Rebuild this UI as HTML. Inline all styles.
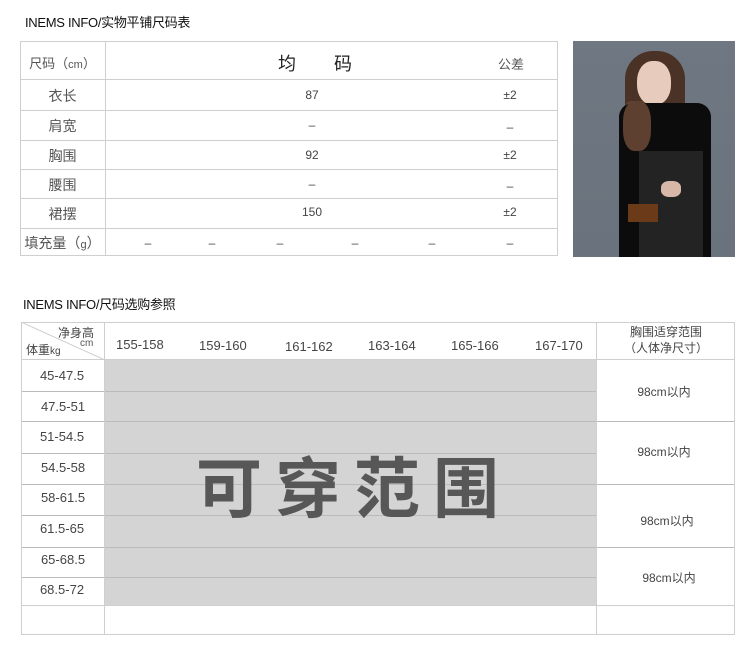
<!DOCTYPE html>
<html><head><meta charset="utf-8"><style>
*{margin:0;padding:0;box-sizing:border-box}
body{width:750px;height:648px;background:#fff;position:relative;overflow:hidden;font-family:"Liberation Sans","Noto Sans CJK SC",sans-serif;color:#333}
.a{position:absolute;white-space:nowrap}
.h{position:absolute;height:1px;background:#cfcfcf}
.v{position:absolute;width:1px;background:#cfcfcf}
.t{font-size:13px;color:#111;letter-spacing:-0.3px}
.c{position:absolute;text-align:center;font-size:12px;color:#444}
.s{font-size:13px;color:#444}
</style></head><body>
<div class="a t" style="left:25px;top:12px">INEMS INFO/实物平铺尺码表</div>

<div class="h" style="left:20px;width:538px;top:41px"></div>
<div class="h" style="left:20px;width:538px;top:79px"></div>
<div class="h" style="left:20px;width:538px;top:110px"></div>
<div class="h" style="left:20px;width:538px;top:140px"></div>
<div class="h" style="left:20px;width:538px;top:169px"></div>
<div class="h" style="left:20px;width:538px;top:198px"></div>
<div class="h" style="left:20px;width:538px;top:228px"></div>
<div class="h" style="left:20px;width:538px;top:255px"></div>
<div class="v" style="left:20px;top:41px;height:215px"></div>
<div class="v" style="left:105px;top:41px;height:215px"></div>
<div class="v" style="left:557px;top:41px;height:215px"></div>

<div class="c" style="left:20px;width:85px;top:53px;font-size:13px;color:#555">尺码（<span style="font-size:11px">cm</span>）</div>
<div class="c" style="left:272px;width:30px;top:50px;font-size:18px;color:#222">均</div>
<div class="c" style="left:328px;width:30px;top:50px;font-size:18px;color:#222">码</div>
<div class="c" style="left:491px;width:40px;top:54px;font-size:13px;color:#555">公差</div>

<div class="c" style="left:20px;width:85px;top:86px;font-size:14px;color:#555">衣长</div>
<div class="c" style="left:20px;width:85px;top:116px;font-size:14px;color:#555">肩宽</div>
<div class="c" style="left:20px;width:85px;top:146px;font-size:14px;color:#555">胸围</div>
<div class="c" style="left:20px;width:85px;top:175px;font-size:14px;color:#555">腰围</div>
<div class="c" style="left:20px;width:85px;top:204px;font-size:14px;color:#555">裙摆</div>
<div class="c" style="left:20px;width:85px;top:233px;font-size:14px;color:#555">填充量（<span style="font-size:11px">g</span>）</div>

<div class="c" style="left:292px;width:40px;top:88px;font-size:12px">87</div>
<div class="c" style="left:292px;width:40px;top:118px">–</div>
<div class="c" style="left:292px;width:40px;top:148px;font-size:12px">92</div>
<div class="c" style="left:292px;width:40px;top:177px">–</div>
<div class="c" style="left:292px;width:40px;top:205px;font-size:12px">150</div>
<div class="c" style="left:490px;width:40px;top:88px;font-size:12px">±2</div>
<div class="c" style="left:490px;width:40px;top:120px">–</div>
<div class="c" style="left:490px;width:40px;top:148px;font-size:12px">±2</div>
<div class="c" style="left:490px;width:40px;top:179px">–</div>
<div class="c" style="left:490px;width:40px;top:205px;font-size:12px">±2</div>
<div class="c" style="left:138px;width:20px;top:236px">–</div>
<div class="c" style="left:202px;width:20px;top:236px">–</div>
<div class="c" style="left:270px;width:20px;top:236px">–</div>
<div class="c" style="left:345px;width:20px;top:236px">–</div>
<div class="c" style="left:422px;width:20px;top:236px">–</div>
<div class="c" style="left:500px;width:20px;top:236px">–</div>

<div class="a" style="left:573px;top:41px;width:162px;height:216px;background:linear-gradient(#6f7782,#6a727d);overflow:hidden">
 <div class="a" style="left:52px;top:10px;width:60px;height:110px;border-radius:28px 28px 10px 10px;background:#4a3226"></div>
 <div class="a" style="left:46px;top:60px;width:34px;height:60px;border-radius:40%;background:#6b4a33"></div>
 <div class="a" style="left:64px;top:20px;width:34px;height:44px;border-radius:45%;background:#e7cbbd"></div>
 <div class="a" style="left:46px;top:62px;width:92px;height:160px;border-radius:14px 14px 0 0;background:#0c0c0c"></div>
 <div class="a" style="left:50px;top:60px;width:28px;height:50px;border-radius:40%;background:#5d4030"></div>
 <div class="a" style="left:66px;top:110px;width:64px;height:110px;background:#232323"></div>
 <div class="a" style="left:55px;top:163px;width:30px;height:18px;background:#6b3a18"></div>
 <div class="a" style="left:88px;top:140px;width:20px;height:16px;border-radius:40%;background:#d9b7a8"></div>
</div>

<div class="a t" style="left:23px;top:294px">INEMS INFO/尺码选购参照</div>

<div class="a" style="left:104px;top:359px;width:492px;height:246px;background:#d4d4d4"></div>
<div class="h" style="left:21px;width:714px;top:322px"></div>
<div class="h" style="left:21px;width:714px;top:359px"></div>
<div class="h" style="left:21px;width:576px;top:391px;background:#bbb"></div>
<div class="h" style="left:21px;width:714px;top:421px;background:#bbb"></div>
<div class="h" style="left:21px;width:576px;top:453px;background:#bbb"></div>
<div class="h" style="left:21px;width:714px;top:484px;background:#bbb"></div>
<div class="h" style="left:21px;width:576px;top:515px;background:#bbb"></div>
<div class="h" style="left:21px;width:714px;top:547px;background:#bbb"></div>
<div class="h" style="left:21px;width:576px;top:577px;background:#bbb"></div>
<div class="h" style="left:21px;width:714px;top:605px"></div>
<div class="h" style="left:21px;width:714px;top:634px"></div>
<div class="v" style="left:21px;top:322px;height:313px"></div>
<div class="v" style="left:104px;top:322px;height:313px"></div>
<div class="v" style="left:596px;top:322px;height:313px"></div>
<div class="v" style="left:734px;top:322px;height:313px"></div>
<svg class="a" style="left:21px;top:322px" width="84" height="38"><line x1="0" y1="0" x2="84" y2="38" stroke="#ccc"/></svg>
<div class="a" style="left:58px;top:324px;font-size:12px;color:#444">净身高</div>
<div class="a" style="left:80px;top:338px;font-size:10px;color:#555">cm</div>
<div class="a" style="left:26px;top:341px;font-size:12px;color:#444">体重<span style="font-size:10px">kg</span></div>

<div class="a s" style="left:116px;top:337px">155-158</div>
<div class="a s" style="left:199px;top:338px">159-160</div>
<div class="a s" style="left:285px;top:339px">161-162</div>
<div class="a s" style="left:368px;top:338px">163-164</div>
<div class="a s" style="left:451px;top:338px">165-166</div>
<div class="a s" style="left:535px;top:338px">167-170</div>
<div class="c" style="left:597px;width:138px;top:324px;font-size:12px;line-height:16px">胸围适穿范围<br>（人体净尺寸）</div>

<div class="c s" style="left:21px;width:82px;top:368px">45-47.5</div>
<div class="c s" style="left:21px;width:84px;top:399px">47.5-51</div>
<div class="c s" style="left:21px;width:82px;top:429px">51-54.5</div>
<div class="c s" style="left:21px;width:84px;top:460px">54.5-58</div>
<div class="c s" style="left:21px;width:84px;top:490px">58-61.5</div>
<div class="c s" style="left:21px;width:82px;top:521px">61.5-65</div>
<div class="c s" style="left:21px;width:84px;top:552px">65-68.5</div>
<div class="c s" style="left:21px;width:82px;top:582px">68.5-72</div>

<div class="c" style="left:597px;width:134px;top:383px">98cm以内</div>
<div class="c" style="left:597px;width:134px;top:443px">98cm以内</div>
<div class="c" style="left:600px;width:134px;top:512px">98cm以内</div>
<div class="c" style="left:602px;width:134px;top:569px">98cm以内</div>

<div class="a" style="left:196px;top:444px;font-size:66px;font-weight:bold;color:#575757;letter-spacing:13px;line-height:80px;font-family:'Noto Sans CJK SC',sans-serif">可穿范围</div>
</body></html>
